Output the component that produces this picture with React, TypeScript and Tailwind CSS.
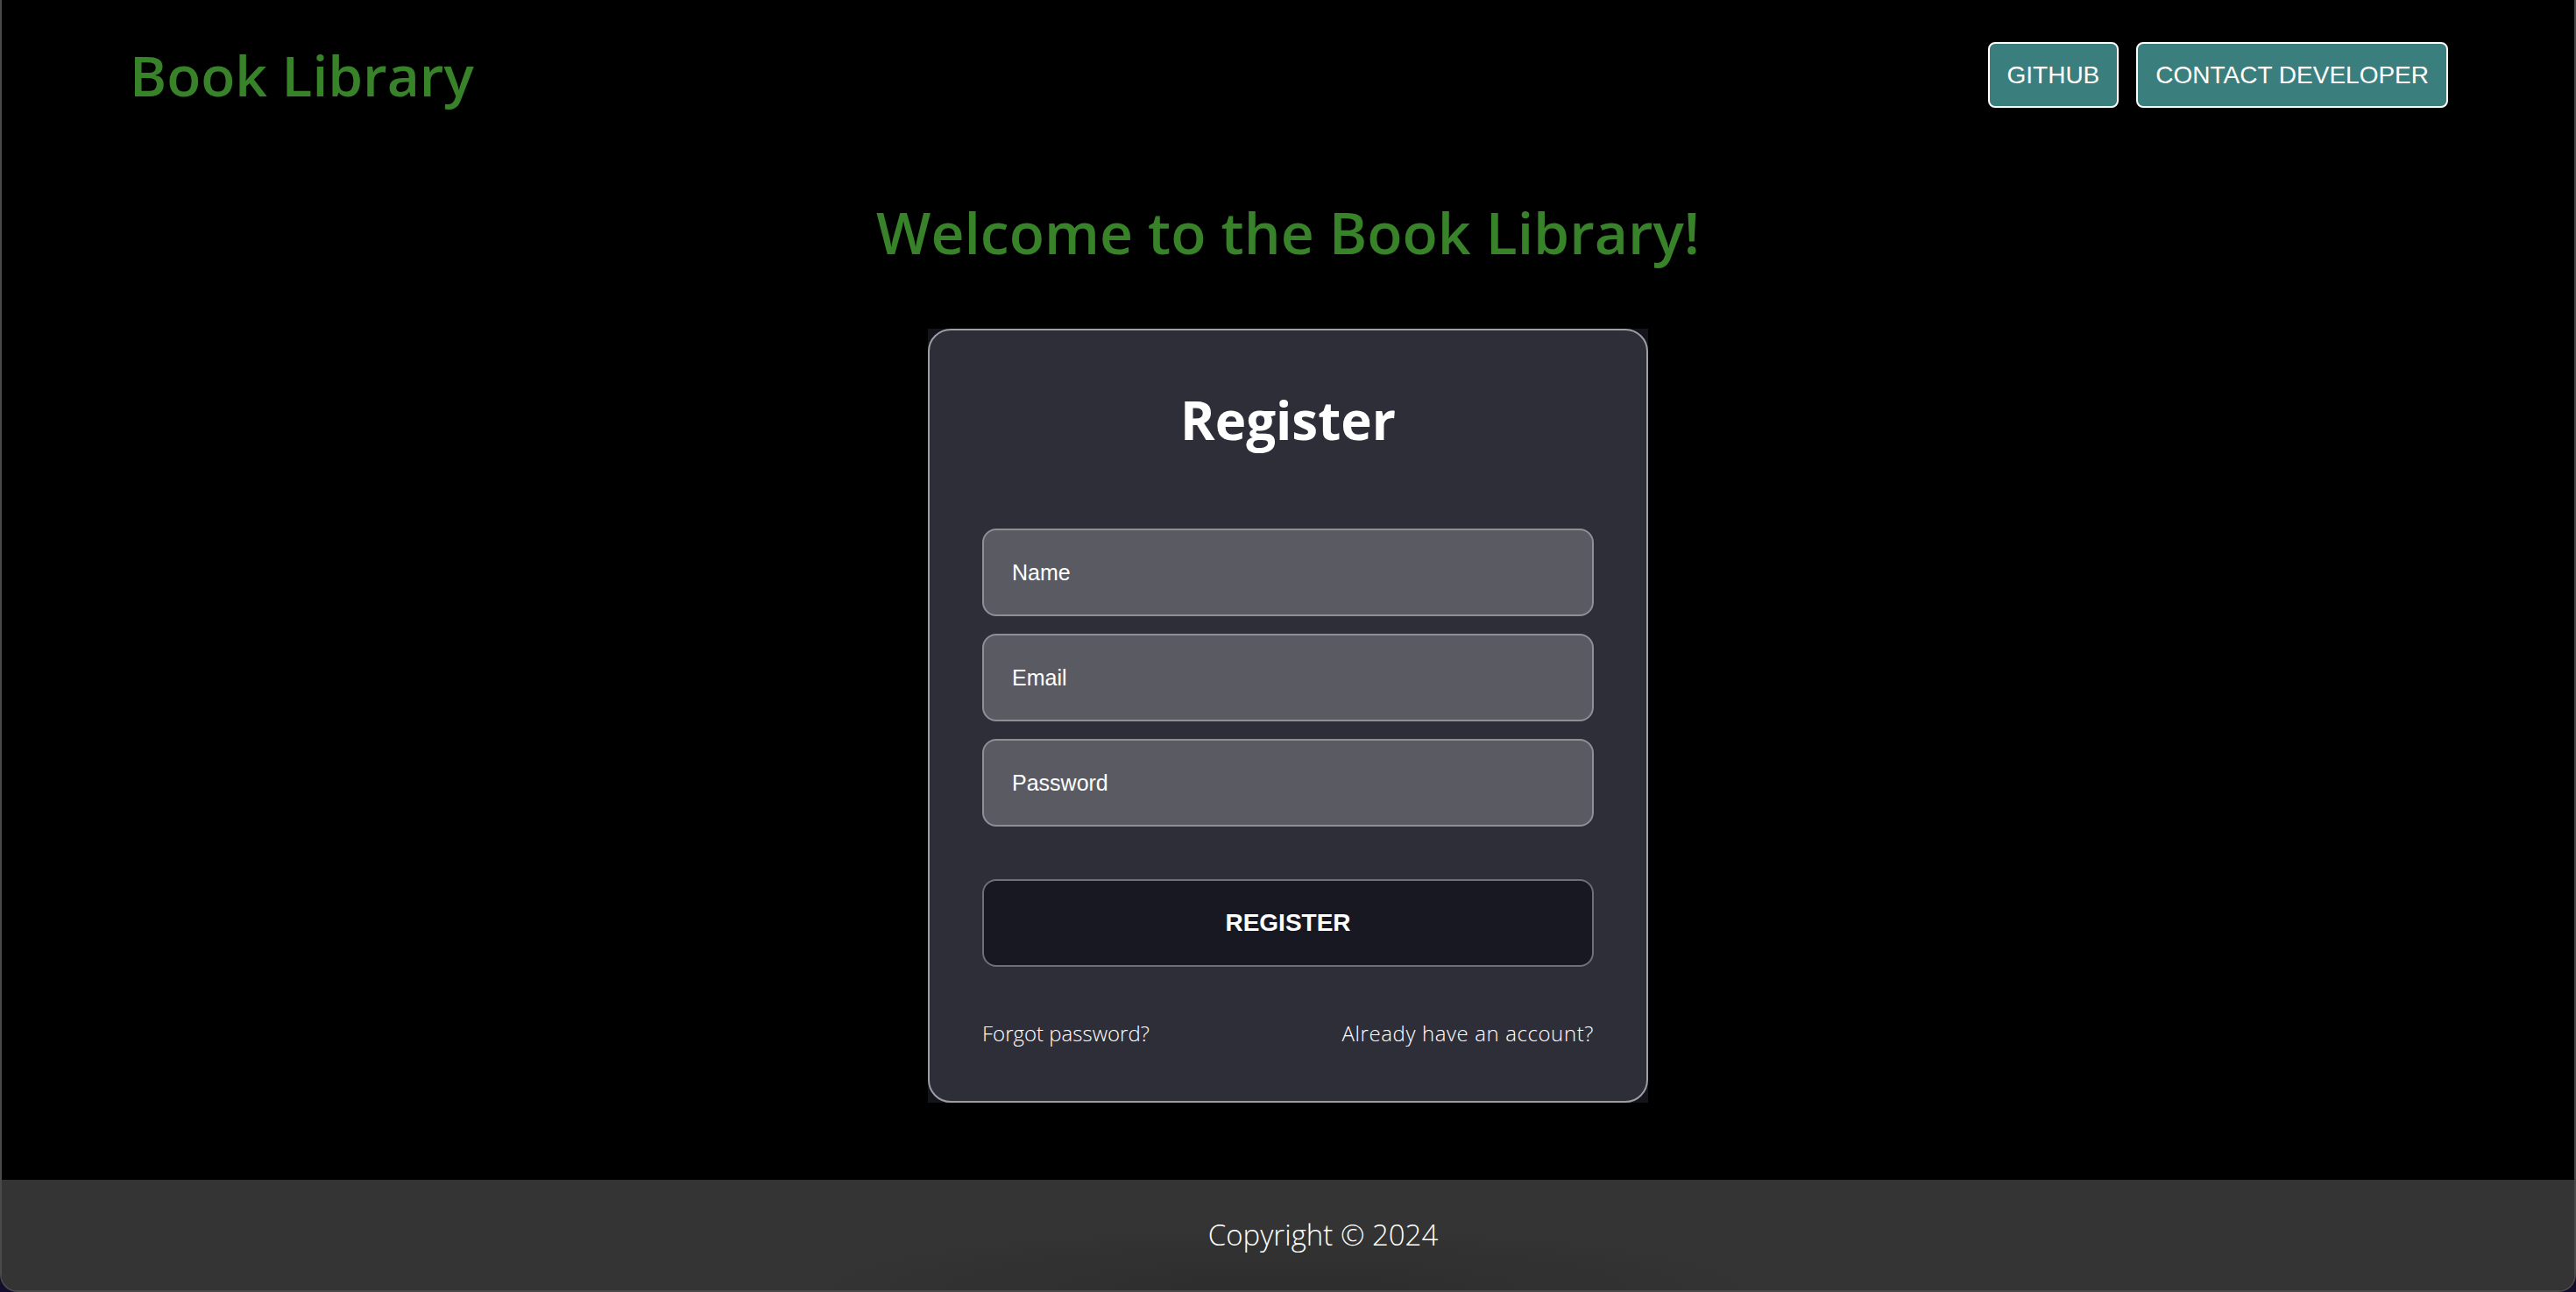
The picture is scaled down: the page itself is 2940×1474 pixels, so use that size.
import { useState } from "react";

const poppins = "font-['Open_Sans','Liberation_Sans',sans-serif]";
const arial = "font-['Liberation_Sans',Arial,sans-serif]";

const NavBtn = ({ label }: { label: string }) => {
  return (
    <button
      className={`h-[75px] px-[20px] flex items-center border-2 border-white rounded-[8px] bg-[#3a7f7e] text-white text-[28px] leading-none ${arial}`}
    >
      {label}
    </button>
  );
};

const Field = ({
  placeholder,
  type,
  value,
  onChange,
}: {
  placeholder: string;
  type: string;
  value: string;
  onChange: (v: string) => void;
}) => {
  return (
    <input
      type={type}
      value={value}
      placeholder={placeholder}
      onChange={(e) => onChange(e.target.value)}
      className={`w-full h-[100px] px-[32px] rounded-[16px] border-2 border-[#8f8f96] bg-[#5a5a63] text-white placeholder:text-white text-[25px] outline-none ${arial}`}
    />
  );
};

const App = () => {
  const [name, setName] = useState("");
  const [email, setEmail] = useState("");
  const [password, setPassword] = useState("");

  return (
    <div className="w-full h-[1474px] bg-[#140d2c]">
      <div className="h-full flex flex-col bg-black border-x-2 border-b-2 border-[#4a4a4a] rounded-b-[20px] overflow-hidden">
        <header className="flex items-center justify-between pl-[146px] pr-[144px] pt-[48px]">
          <h1
            className={`text-[64px] leading-none font-semibold text-[#38822a] ${poppins}`}
          >
            Book Library
          </h1>
          <div className="flex gap-[20px]">
            <NavBtn label="GITHUB" />
            <NavBtn label="CONTACT DEVELOPER" />
          </div>
        </header>

        <main className="flex-1 flex flex-col items-center">
          <h2
            className={`mt-[108px] text-[66px] leading-none font-semibold text-[#38822a] ${poppins}`}
          >
            Welcome to the Book Library!
          </h2>

          <div className="mt-[78px] bg-[#14141c]">
            <form
              onSubmit={(e) => e.preventDefault()}
              className="w-[822px] flex flex-col px-[60px] pt-[72px] pb-[61px] rounded-[26px] border-2 border-[#9d9da3] bg-[#2e2e38]"
            >
              <h3
                className={`text-center text-[60px] leading-none font-bold text-white ${poppins}`}
              >
                Register
              </h3>
              <div className="mt-[94px] flex flex-col gap-[20px]">
                <Field placeholder="Name" type="text" value={name} onChange={setName} />
                <Field placeholder="Email" type="email" value={email} onChange={setEmail} />
                <Field
                  placeholder="Password"
                  type="password"
                  value={password}
                  onChange={setPassword}
                />
              </div>
              <button
                className={`mt-[60px] h-[100px] rounded-[16px] border-2 border-[#6f6f76] bg-[#181822] text-white text-[28px] font-bold ${arial}`}
              >
                REGISTER
              </button>
              <div
                className={`mt-[60px] flex justify-between text-[24px] leading-[32px] font-light text-white ${poppins}`}
              >
                <a href="#">Forgot password?</a>
                <a href="#" className="tracking-[0.6px]">
                  Already have an account?
                </a>
              </div>
            </form>
          </div>
        </main>

        <footer className="h-[126px] flex items-center justify-center pl-[80px] bg-[#343434] bg-[radial-gradient(ellipse_20%_60%_at_50%_100%,#2d2d2d,#343434)]">
          <p className={`text-[33px] font-light text-white ${poppins}`}>
            Copyright © 2024
          </p>
        </footer>
      </div>
    </div>
  );
};

export default App;
